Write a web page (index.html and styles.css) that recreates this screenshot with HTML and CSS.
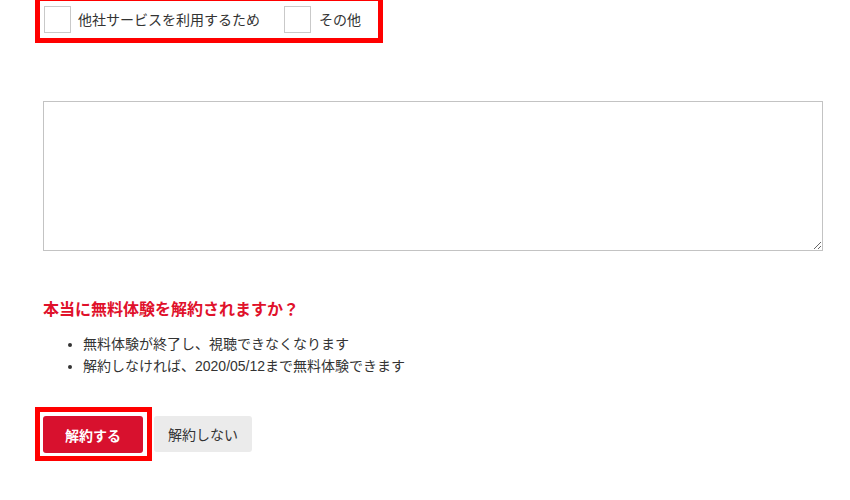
FILE: index.html
```html
<!DOCTYPE html>
<html lang="ja">
<head>
<meta charset="utf-8">
<title>解約</title>
<link rel="stylesheet" href="styles.css">
</head>
<body>
<div class="page">
  <div class="reasons">
    <label class="reason reason-first"><span class="box"></span><span class="reason-text">他社サービスを利用するため</span></label>
    <label class="reason reason-last"><span class="box"></span><span class="reason-text">その他</span></label>
  </div>

  <textarea class="comment"></textarea>

  <h2 class="confirm-title">本当に無料体験を解約されますか？</h2>
  <ul class="notes">
    <li>無料体験が終了し、視聴できなくなります</li>
    <li>解約しなければ、2020/05/12まで無料体験できます</li>
  </ul>

  <div class="actions">
    <div class="highlight">
      <button class="btn btn-primary" type="button">解約する</button>
    </div>
    <button class="btn btn-secondary" type="button">解約しない</button>
  </div>
</div>
</body>
</html>
```

FILE: styles.css
```css
html, body {
  margin: 0;
  padding: 0;
  background: #ffffff;
}

body {
  font-family: "Liberation Sans", "Noto Sans CJK JP", sans-serif;
  color: #333333;
  font-size: 14px;
}

.page {
  padding-left: 35px;
  width: 790px;
}

.reasons {
  display: inline-flex;
  align-items: center;
  border: 5px solid #ff0000;
  margin-top: -4px;
  padding: 5px 17px 5px 4px;
  background: #ffffff;
}

.reason {
  display: flex;
  align-items: center;
}

.reason-first {
  margin-right: 24px;
}

.box {
  width: 25px;
  height: 25px;
  border: 1px solid #c9c9c9;
  background: #ffffff;
  margin-right: 7px;
}

.reason-last .box {
  margin-right: 8px;
}

.reason-text {
  font-size: 14px;
  line-height: 20px;
  color: #333333;
}

.comment {
  display: block;
  box-sizing: border-box;
  width: 780px;
  height: 150px;
  margin: 58px 0 0 8px;
  border: 1px solid #c3c3c3;
  border-radius: 0;
  background: #ffffff;
  padding: 4px;
  font-family: inherit;
}

.confirm-title {
  margin: 47px 0 0 8px;
  font-size: 16px;
  line-height: 24px;
  font-weight: bold;
  color: #e0112b;
}

.notes {
  margin: 11px 0 0 8px;
  padding-left: 40px;
  font-size: 14px;
  line-height: 22px;
  color: #333333;
}

.actions {
  display: flex;
  align-items: flex-start;
  margin-top: 30px;
}

.highlight {
  border: 5px solid #ff0000;
  padding: 4px 4px 3px 3px;
}

.btn {
  font-family: "Liberation Sans", "Noto Sans CJK JP", sans-serif;
  font-size: 14px;
  border: none;
  border-radius: 3px;
  padding: 0;
  cursor: pointer;
}

.btn-primary {
  width: 100px;
  height: 37px;
  background: #d8112e;
  color: #ffffff;
  font-weight: bold;
}

.btn-secondary {
  width: 98px;
  height: 36px;
  margin: 9px 0 0 2px;
  background: #ebebeb;
  color: #333333;
}
```
